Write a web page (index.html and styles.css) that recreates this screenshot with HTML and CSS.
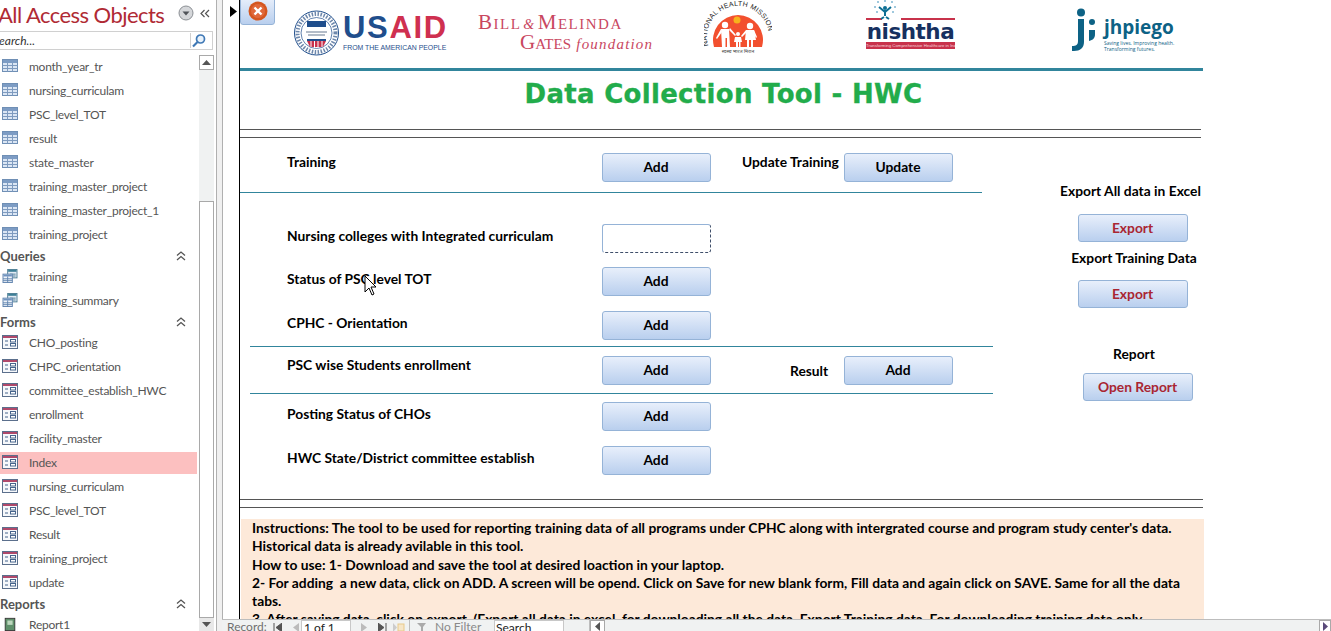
FILE: index.html
```html
<!DOCTYPE html>
<html lang="en">
<head>
<meta charset="utf-8">
<title>Data Collection Tool - HWC</title>
<link rel="stylesheet" href="styles.css">
</head>
<body>
<svg class="defs" width="0" height="0" aria-hidden="true">
  <defs>
    <symbol id="i-table" viewBox="0 0 16 14">
      <rect x="0.5" y="0.5" width="15" height="12" fill="#dbe6f4" stroke="#6f8fb5"/>
      <rect x="1" y="1" width="14" height="3" fill="#7d9cc4"/>
      <path d="M0.5 6.5h15M0.5 9.5h15M5.5 4v8.5M10.5 4v8.5" stroke="#7f9bbf" fill="none"/>
    </symbol>
    <symbol id="i-query" viewBox="0 0 16 15">
      <rect x="5.5" y="0.5" width="10" height="9" fill="#e3ebf5" stroke="#4c7d93"/>
      <rect x="6" y="1" width="9" height="2" fill="#3d7f97"/>
      <path d="M8 5.5h6M8 7.5h6" stroke="#4c7d93"/>
      <rect x="0.5" y="5.5" width="10" height="9" fill="#eef3f9" stroke="#5f82ad"/>
      <rect x="1" y="6" width="9" height="2" fill="#6f93bf"/>
      <path d="M0.5 10.5h10M0.5 12.5h10M5.5 8v6.5" stroke="#5f82ad"/>
    </symbol>
    <symbol id="i-form" viewBox="0 0 16 14">
      <rect x="0.5" y="0.5" width="15" height="13" fill="#f6f8fb" stroke="#5b6f8c"/>
      <rect x="1" y="1" width="14" height="2" fill="#b0496b"/>
      <path d="M3 6h3M3 10h3" stroke="#46648c"/>
      <rect x="8.5" y="4.5" width="5" height="2.5" fill="#fff" stroke="#46648c"/>
      <rect x="8.5" y="8.5" width="5" height="2.5" fill="#fff" stroke="#46648c"/>
    </symbol>
    <symbol id="i-up2" viewBox="0 0 10 10">
      <path d="M1 4.5 5 1l4 3.5M1 9 5 5.5 9 9" fill="none" stroke="#555" stroke-width="1.3"/>
    </symbol>
  </defs>
</svg>

<div class="app">
  <nav class="nav">
    <header class="nav-title">
      <span class="nav-title-text">All Access Objects</span>
      <svg class="nav-drop" width="16" height="16" viewBox="0 0 16 16"><circle cx="8" cy="8" r="7" fill="#d5d7da" stroke="#8b8f94"/><path d="M4.5 6.5h7L8 10.500z" fill="#4f5358"/></svg>
      <svg class="nav-collapse" width="10" height="9" viewBox="0 0 10 9"><path d="M4.500 1 1 4.500 4.500 8M9 1 5.500 4.500 9 8" fill="none" stroke="#555" stroke-width="1.200"/></svg>
    </header>
    <div class="nav-search">
      <span class="nav-search-text">Search...</span>
      <svg class="nav-search-icon" width="15" height="15" viewBox="0 0 15 15"><circle cx="9" cy="6" r="4" fill="#e8f2fb" stroke="#3f78b5" stroke-width="1.700"/><path d="M6 9 1.500 13.500" stroke="#3f78b5" stroke-width="2.200"/></svg>
    </div>
    <div class="nav-body">
      <div class="nav-list">
        <a class="item"><svg class="icon"><use href="#i-table"/></svg>month_year_tr</a>
        <a class="item"><svg class="icon"><use href="#i-table"/></svg>nursing_curriculam</a>
        <a class="item"><svg class="icon"><use href="#i-table"/></svg>PSC_level_TOT</a>
        <a class="item"><svg class="icon"><use href="#i-table"/></svg>result</a>
        <a class="item"><svg class="icon"><use href="#i-table"/></svg>state_master</a>
        <a class="item"><svg class="icon"><use href="#i-table"/></svg>training_master_project</a>
        <a class="item"><svg class="icon"><use href="#i-table"/></svg>training_master_project_1</a>
        <a class="item"><svg class="icon"><use href="#i-table"/></svg>training_project</a>
        <div class="group">Queries<svg class="group-icon"><use href="#i-up2"/></svg></div>
        <a class="item"><svg class="icon"><use href="#i-query"/></svg>training</a>
        <a class="item"><svg class="icon"><use href="#i-query"/></svg>training_summary</a>
        <div class="group">Forms<svg class="group-icon"><use href="#i-up2"/></svg></div>
        <a class="item"><svg class="icon"><use href="#i-form"/></svg>CHO_posting</a>
        <a class="item"><svg class="icon"><use href="#i-form"/></svg>CHPC_orientation</a>
        <a class="item"><svg class="icon"><use href="#i-form"/></svg>committee_establish_HWC</a>
        <a class="item"><svg class="icon"><use href="#i-form"/></svg>enrollment</a>
        <a class="item"><svg class="icon"><use href="#i-form"/></svg>facility_master</a>
        <a class="item item-active"><svg class="icon"><use href="#i-form"/></svg>Index</a>
        <a class="item"><svg class="icon"><use href="#i-form"/></svg>nursing_curriculam</a>
        <a class="item"><svg class="icon"><use href="#i-form"/></svg>PSC_level_TOT</a>
        <a class="item"><svg class="icon"><use href="#i-form"/></svg>Result</a>
        <a class="item"><svg class="icon"><use href="#i-form"/></svg>training_project</a>
        <a class="item"><svg class="icon"><use href="#i-form"/></svg>update</a>
        <div class="group">Reports<svg class="group-icon"><use href="#i-up2"/></svg></div>
        <a class="item"><svg class="icon" viewBox="0 0 16 16"><rect x="2.500" y="1.500" width="11" height="14" fill="#5f8f6a" stroke="#333"/><rect x="5" y="4" width="6" height="5" fill="#bcd7bd"/></svg>Report1</a>
      </div>
      <div class="vscroll">
        <span class="vs-btn"><svg width="9" height="5" viewBox="0 0 9 5"><path d="M0 5h9L4.500 0z" fill="#555"/></svg></span>
        <span class="vs-track"></span>
        <span class="vs-thumb"></span>
        <span class="vs-btn vs-btn-down"><svg width="9" height="5" viewBox="0 0 9 5"><path d="M0 0h9L4.500 5z" fill="#555"/></svg></span>
      </div>
    </div>
  </nav>

  <div class="splitter"></div>

  <div class="workspace">
    <div class="doc">
      <div class="selector"><svg width="7" height="11" viewBox="0 0 7 11"><path d="M0 0l7 5.500L0 11z" fill="#000"/></svg></div>
      <main class="form">
        <button class="close-btn" aria-label="Close">
          <svg width="20" height="20" viewBox="0 0 20 20"><circle cx="10" cy="10" r="9.500" fill="#d4561f"/><circle cx="10" cy="10" r="7" fill="#e0683a"/><path d="M6.500 6.500l7 7M13.500 6.500l-7 7" stroke="#fff" stroke-width="2.400"/></svg>
        </button>

        <div class="logos">
          <div class="logo-usaid">
            <svg class="usaid-seal" width="47" height="46" viewBox="0 0 47 46">
              <circle cx="23.500" cy="23" r="22" fill="#fff" stroke="#1f4e8c"/>
              <circle cx="23.500" cy="23" r="15.500" fill="#fff" stroke="#1f4e8c" stroke-width=".7"/>
              <circle cx="23.500" cy="23" r="19" fill="none" stroke="#6d87ab" stroke-width="4" stroke-dasharray="1.500 1.500"/>
              <rect x="14" y="11" width="19" height="6" fill="#1f4e8c"/>
              <path d="M13 22h21M15 25h17" stroke="#9aa6b6" stroke-width="1.500"/>
              <rect x="14" y="29" width="19" height="2" fill="#1f4e8c"/>
              <path d="M14 31h19l-3 6H17z" fill="#c8304c"/>
              <path d="M18 31v6M21.500 31v7M25 31v7M29 31v6" stroke="#fff"/>
            </svg>
            <div class="usaid-words">
              <div class="usaid-name"><span class="usaid-us">US</span><span class="usaid-aid">AID</span></div>
              <div class="usaid-sub">FROM THE AMERICAN PEOPLE</div>
            </div>
          </div>
          <div class="logo-gates">
            <div class="gates-1">Bill<i class="gates-amp">&amp;</i>Melinda</div>
            <div class="gates-2">Gates <i class="gates-f">foundation</i></div>
          </div>
          <div class="logo-nhm">
            <svg width="68" height="56" viewBox="0 0 68 56">
              <defs><path id="nhm-arc" d="M4.900 47.600A31 31 0 1 1 63.100 47.600"/></defs>
              <path d="M10 47A25 25 0 1 1 58 47z" fill="#f2502f"/>
              <circle cx="33" cy="20" r="3.500" fill="#f7b21c"/>
              <g fill="#fff">
                <circle cx="21" cy="25" r="3.200"/><circle cx="46" cy="26" r="3.200"/><circle cx="34" cy="34" r="2"/>
                <path d="M17 29h8l1 18h-3v-9h-1.500v9H18zM42 30h8l2 10h-3v7h-2v-7h-2v7h-2v-7h-2z"/>
                <path d="M31 37h6l1 5h-1.500v5h-1.500v-5h-1v5H32v-5h-2z"/>
                <path d="M17 29l-5 9 1 1 5-7zM25 30l6 6 1-1-6-7zM42 30l-5 6 1 1 5-5zM50 30l3 7-1 1-3-6z"/>
              </g>
              <text class="nhm-arc-text"><textPath href="#nhm-arc" startOffset="2">NATIONAL HEALTH MISSION</textPath></text>
              <text class="nhm-hindi" x="34" y="53" text-anchor="middle">स्वस्थ भारत मिशन</text>
            </svg>
          </div>
          <div class="logo-nishtha">
            <svg class="nishtha-top" width="89" height="21" viewBox="0 0 89 21">
              <path d="M0 19h16M35 19h54" stroke="#c8324b" stroke-width="2"/>
              <circle cx="19" cy="8" r="2" fill="#0e6f94"/>
              <path d="M19 10v6M19 12l-6-5M19 12l6-5M18 17l-3 2M20 17l3 2" stroke="#0e6f94" stroke-width="2"/>
              <g fill="#7fb6d2"><circle cx="12" cy="2" r="1"/><circle cx="19" cy="1" r="1"/><circle cx="26" cy="2" r="1"/><circle cx="9" cy="7" r="1"/><circle cx="29" cy="7" r="1"/><circle cx="11" cy="12" r="1"/><circle cx="27" cy="12" r="1"/></g>
            </svg>
            <div class="nishtha-name">nishtha</div>
            <div class="nishtha-band">Transforming Comprehensive Healthcare in India</div>
          </div>
          <div class="logo-jhpiego">
            <svg width="33" height="43" viewBox="0 0 33 43">
              <circle cx="14" cy="4.500" r="4" fill="#0d6285"/>
              <path d="M11 11h6v23c0 6-4 9-10 9H5v-5c4 0 6-1 6-5z" fill="#0d6285"/>
              <circle cx="25" cy="14" r="3" fill="#0d6285"/>
              <path d="M22 22h6v4c0 4-2 6-6 7z" fill="#0d6285"/>
            </svg>
            <div class="jh-words">
              <div class="jh-name">jhpiego</div>
              <div class="jh-sub">Saving lives. Improving health.<br>Transforming futures.</div>
            </div>
          </div>
        </div>

        <h1 class="title">Data Collection Tool - HWC</h1>
        <div class="double-rule double-rule-top"></div>

        <div class="panel">
          <section class="rows">
            <div class="row row-first">
              <span class="label label-up">Training</span>
              <button class="btn">Add</button>
              <span class="label label-up label-side">Update Training</span>
              <button class="btn">Update</button>
            </div>
            <div class="rule rule-short"></div>
            <div class="row row-after-short">
              <span class="label">Nursing colleges with Integrated curriculam</span>
              <span class="focus-box"></span>
            </div>
            <div class="row row-a">
              <span class="label">Status of PSC level TOT</span>
              <button class="btn">Add</button>
            </div>
            <div class="row row-b">
              <span class="label">CPHC - Orientation</span>
              <button class="btn">Add</button>
            </div>
            <div class="rule rule-long rule-1"></div>
            <div class="row row-c">
              <span class="label label-up">PSC wise Students enrollment</span>
              <button class="btn">Add</button>
              <span class="label label-down label-result">Result</span>
              <button class="btn">Add</button>
            </div>
            <div class="rule rule-long rule-2"></div>
            <div class="row row-d">
              <span class="label">Posting Status of CHOs</span>
              <button class="btn">Add</button>
            </div>
            <div class="row row-b">
              <span class="label">HWC State/District committee establish</span>
              <button class="btn">Add</button>
            </div>
          </section>
          <aside class="side">
            <div class="side-label">Export All data in Excel</div>
            <button class="btn btn-red side-btn side-btn-1">Export</button>
            <div class="side-label side-label-2">Export Training Data</div>
            <button class="btn btn-red side-btn side-btn-2">Export</button>
            <div class="side-label side-label-3">Report</div>
            <button class="btn btn-red side-btn side-btn-3">Open Report</button>
          </aside>
        </div>

        <div class="double-rule double-rule-bottom"></div>
        <div class="instructions">
          Instructions: The tool to be used for reporting training data of all programs under CPHC along with intergrated course and program study center's data.<br>
          Historical data is already avilable in this tool.<br>
          How to use: 1- Download and save the tool at desired loaction in your laptop.<br>
          2- For adding&nbsp; a new data, click on ADD. A screen will be opend. Click on Save for new blank form, Fill data and again click on SAVE. Same for all the data<br>
          tabs.<br>
          3. After saving data, click on export. (Export all data in excel, for downloading all the data, Export Training data. For downloading training data only
        </div>
      </main>
    </div>

    <footer class="recordbar">
      <span class="rb-label">Record:</span>
      <svg class="rb-nav rb-first" width="9" height="9" viewBox="0 0 9 9"><path d="M1 0v9M9 0v9L3 4.500z" fill="#555" stroke="#555"/></svg>
      <svg class="rb-nav rb-prev" width="7" height="9" viewBox="0 0 7 9"><path d="M6 0v9L0 4.500z" fill="#bbb"/></svg>
      <span class="rb-box rb-current">1 of 1</span>
      <svg class="rb-nav rb-next" width="7" height="9" viewBox="0 0 7 9"><path d="M0 0v9l6-4.500z" fill="#bbb"/></svg>
      <svg class="rb-nav rb-last" width="9" height="9" viewBox="0 0 9 9"><path d="M0 0v9l6-4.500zM8 0v9" fill="#555" stroke="#555"/></svg>
      <svg class="rb-nav rb-new" width="12" height="9" viewBox="0 0 12 9"><path d="M0 0v9l4-4.500z" fill="#ccc"/><rect x="5" y="1" width="6" height="7" fill="#f6e6c8" stroke="#e8c98a"/></svg>
      <span class="rb-sep"></span>
      <svg class="rb-funnel" width="10" height="9" viewBox="0 0 10 9"><path d="M0 0h9L6 4v5H4V4z" fill="#aaa"/></svg>
      <span class="rb-filter">No Filter</span>
      <span class="rb-box rb-search">Search</span>
      <span class="rb-sep rb-sep-2"></span>
      <span class="hs-btn hs-btn-left"><svg width="5" height="9" viewBox="0 0 5 9"><path d="M5 0v9L0 4.500z" fill="#555"/></svg></span>
      <span class="hs-track"></span>
      <span class="hs-btn"><svg width="5" height="9" viewBox="0 0 5 9"><path d="M0 0v9l5-4.500z" fill="#5b4a7a"/></svg></span>
    </footer>
  </div>

  <svg class="pointer" width="12" height="21" viewBox="0 0 12 21"><path d="M1 1v16l4-4 3 7 2-1-3-7h5z" fill="#fff" stroke="#000"/></svg>
</div>
</body>
</html>
```

FILE: styles.css
```css
* { box-sizing: border-box; }
html, body { margin: 0; padding: 0; }
body {
  width: 1331px;
  height: 631px;
  overflow: hidden;
  background: #fff;
  font-family: Lato, "Liberation Sans", sans-serif;
  color: #000;
}
.defs { position: absolute; }
.app { position: relative; display: flex; height: 631px; overflow: hidden; }

/* navigation pane */
.nav { width: 214px; flex: none; display: flex; flex-direction: column; height: 631px; }
.nav-title { height: 31px; flex: none; display: flex; align-items: center; overflow: hidden; }
.nav-title-text { font-size: 22px; letter-spacing: -.55px; color: #b02a34; width: 178px; flex: none; margin-left: -2px; padding-bottom: 3px; white-space: nowrap; }
.nav-drop { margin: 0 0 6px 2px; flex: none; }
.nav-collapse { margin: 0 0 5px 6px; flex: none; }
.nav-search {
  height: 19px; flex: none; display: flex; align-items: center; overflow: hidden;
  border: 1px solid #d0d0d0; border-left: 0; width: 213px;
}
.nav-search-text { font-size: 12px; font-style: italic; color: #333; margin-left: -7px; width: 202px; flex: none; }
.nav-search-icon { margin-left: -5px; flex: none; background: #fff; border-left: 1px solid #d0d0d0; width: 17px; }
.nav-body { display: flex; flex: 1; min-height: 0; padding-top: 4px; margin-top: 1px; }
.nav-list { width: 199px; flex: none; display: flex; flex-direction: column; overflow: hidden; padding-right: 2px; }
.item {
  height: 22px; margin: 1px 0; padding: 0 0 2px 2px; flex: none; display: flex; align-items: center;
  font-size: 12px; letter-spacing: -.25px; color: #555; white-space: nowrap;
}
.item-active { background: #fcc0c0; }
.icon { width: 16px; height: 14px; margin-right: 11px; flex: none; }
.group {
  height: 18px; flex: none; display: flex; align-items: center; justify-content: space-between;
  font-size: 13px; font-weight: 700; color: #555; padding-right: 11px;
}
.group-icon { width: 10px; height: 10px; }

.vscroll { width: 15px; flex: none; display: flex; flex-direction: column; background: #f0f2f2; }
.vs-btn { height: 15px; flex: none; display: flex; align-items: center; justify-content: center; border: 1px solid #a9a9a9; background: #fff; }
.vs-btn-down { height: 13px; background: #e8e8e8; border: 0; }
.vs-track { height: 131px; flex: none; }
.vs-thumb { flex: 1; background: #fff; border: 1px solid #a9a9a9; }

.splitter { width: 7px; margin-left: 2px; flex: none; background: #f0f0f0; border-left: 1px solid #b0b0b0; border-right: 1px solid #b0b0b0; }

.workspace { flex: 1; display: flex; flex-direction: column; min-width: 0; height: 631px; }
.doc { flex: 1; min-height: 0; display: flex; overflow: hidden; }
.selector { width: 16px; flex: none; padding: 1px 0 0 6px; margin-left: 1px; border-right: 1px solid #000; }

/* form */
.form { position: relative; flex: 1; min-width: 0; overflow: hidden; }
.close-btn {
  position: absolute; left: 0; top: -3px; width: 35px; height: 28px; padding: 0;
  display: flex; align-items: center; justify-content: center;
  border: 1px solid #95b3d7; border-radius: 0 0 3px 3px;
  background: linear-gradient(#e8effb, #b9cfee);
}
.logos { width: 963px; height: 71px; display: grid; grid-template-columns: 185px 226px 160px 208px 1fr; padding-left: 53px; border-bottom: 3px solid #31859c; }
.logo-usaid { display: flex; padding-top: 10px; height: 56px; }
.usaid-seal { flex: none; }
.usaid-words { margin-left: 3px; padding-top: 2px; }
.usaid-name { font-family: "Liberation Sans", sans-serif; font-weight: 700; font-size: 31px; line-height: 31px; letter-spacing: 1.7px; }
.usaid-us { color: #1f4e8c; }
.usaid-aid { color: #cf3050; }
.usaid-sub { font-family: "Liberation Sans", sans-serif; font-size: 6.900px; line-height: 9px; color: #1f4e8c; white-space: nowrap; }
.logo-gates { font-family: "Liberation Serif", serif; color: #c9475f; padding-top: 13px; white-space: nowrap; }
.gates-1, .gates-2 { font-variant: small-caps; font-size: 21px; }
.gates-1 { line-height: 19px; letter-spacing: 1.500px; }
.gates-2 { line-height: 17px; padding-left: 42px; }
.gates-amp { font-size: 14px; margin: 0 2px; }
.gates-f { font-variant: normal; font-size: 15px; letter-spacing: 1.2px; }
.logo-nhm { height: 56px; }
.nhm-arc-text { font-family: "Liberation Sans", sans-serif; font-size: 7px; letter-spacing: .25px; fill: #222; }
.nhm-hindi { font-family: "Noto Sans", "DejaVu Sans", sans-serif; font-size: 5px; fill: #444; }
.logo-nishtha { width: 89px; margin-left: 2px; }
.nishtha-top { display: block; }
.nishtha-name { font-family: "DejaVu Sans", sans-serif; font-weight: 700; font-size: 21.500px; line-height: 21px; color: #16305f; letter-spacing: -.5px; text-align: center; white-space: nowrap; }
.nishtha-band { background: #c8324b; color: #f5d7dc; font-family: "Liberation Sans", sans-serif; font-size: 4.300px; line-height: 7px; text-align: center; white-space: nowrap; overflow: hidden; }
.logo-jhpiego { display: flex; padding-top: 8px; height: 56px; margin-left: -5px; }
.jh-words { margin-left: 4px; padding-top: 9px; }
.jh-name { font-family: "Open Sans", sans-serif; font-weight: 700; font-size: 19px; line-height: 20px; color: #0d6285; }
.jh-sub { font-family: "Open Sans", sans-serif; font-size: 5px; line-height: 6px; margin-top: 3px; color: #0d6285; white-space: nowrap; }

.title {
  margin: 0; width: 963px; height: 58px; padding: 6px 0 0 4px; text-align: center;
  font-family: "DejaVu Sans", sans-serif; font-weight: 700; font-size: 26px; line-height: 34px;
  letter-spacing: .3px; color: #22ac4b; -webkit-text-stroke: .3px #22ac4b;
}
.double-rule { height: 9px; border-top: 1px solid #555; border-bottom: 1px solid #555; }
.double-rule-top { width: 961px; }
.double-rule-bottom { width: 963px; }

.panel { display: flex; width: 963px; height: 361px; }
.rows { width: 760px; flex: none; }
.row { display: grid; grid-template-columns: 315px 109px 31px 102px 109px; padding-left: 47px; height: 29px; align-items: start; }
.row-first { margin-top: 15px; }
.row-after-short { margin-top: 31px; }
.row-a { margin-top: 14px; }
.row-b { margin-top: 15px; }
.row-c { margin-top: 9px; }
.row-d { margin-top: 8px; }
.rule { height: 1px; background: #31859c; }
.rule-short { margin-top: 10px; width: 742px; }
.rule-long { margin-left: 10px; width: 743px; }
.rule-1 { margin-top: 6px; }
.rule-2 { margin-top: 8px; }
.label { font-size: 13.800px; font-weight: 700; line-height: 18px; padding-top: 3px; white-space: nowrap; }
.label-up { padding-top: 0; }
.label-down { padding-top: 6px; }
.label-side { grid-column: 3 / 5; padding-left: 31px; }
.label-result { grid-column: 3 / 5; padding-left: 79px; }
.btn {
  width: 109px; height: 29px; padding: 0 1px 2px 0; font-family: inherit; font-size: 13.800px; font-weight: 700; color: #000;
  border: 1px solid #95b3d7; border-radius: 3px; background: linear-gradient(#e8effb, #b9cfee);
}
.focus-box { width: 109px; height: 29px; background: #fff; border: 1px solid #95b3d7; border-right: 1px dashed #3f4f6a; border-bottom: 1px dashed #3f4f6a; border-radius: 3px; }

.side { flex: 1; padding: 44px 0 0 60px; }
.side-label { width: 140px; font-size: 13.800px; font-weight: 700; line-height: 18px; text-align: center; white-space: nowrap; }
.side-label-2 { margin-top: 7px; padding-left: 8px; }
.side-label-3 { margin-top: 37px; padding-left: 8px; }
.btn-red { color: #a92632; }
.side-btn { display: block; width: 110px; height: 28px; margin-left: 18px; }
.side-btn-1 { margin-top: 14px; }
.side-btn-2 { margin-top: 13px; }
.side-btn-3 { margin-top: 10px; margin-left: 23px; }

.instructions {
  margin: 11px 0 0 1px; width: 963px; height: 120px; padding: 0 0 0 11px;
  background: #fde9d9; font-size: 13.800px; font-weight: 700; line-height: 18.300px; white-space: nowrap; overflow: hidden;
}

/* record bar */
.recordbar {
  height: 12px; flex: none; display: flex; align-items: flex-start; overflow: hidden; margin-left: -1px;
  background: #f0f2f2; border-top: 1px solid #bdbdbd; font-size: 12px; line-height: 14px; color: #6f6f6f; white-space: nowrap;
}
.rb-label { margin-left: 5px; width: 46px; flex: none; }
.rb-nav, .rb-funnel { flex: none; margin-top: 3px; }
.rb-prev { margin-left: 11px; }
.rb-box { flex: none; background: #fff; border: 1px solid #c8c8c8; color: #222; padding-left: 2px; height: 14px; }
.rb-first { margin-left: 0; }
.rb-current { width: 50px; margin-left: 1px; }
.rb-next { margin-left: 10px; }
.rb-last { margin-left: 10px; }
.rb-new { margin-left: 6px; }
.rb-sep { width: 1px; height: 12px; background: #bdbdbd; margin-left: 4px; flex: none; }
.rb-funnel { margin-left: 7px; }
.rb-filter { width: 50px; margin-left: 8px; flex: none; color: #8a8a8a; }
.rb-search { width: 70px; margin-left: 9px; padding-left: 1px; }
.rb-sep-2 { margin-left: 25px; }
.hs-btn { width: 12px; height: 12px; flex: none; display: flex; align-items: center; justify-content: center; background: #fff; border: 1px solid #a9a9a9; }
.hs-btn-left { width: 15px; }
.hs-track { flex: 1; background: #f0f2f2; }

.pointer { position: absolute; left: 364px; top: 275px; }
```
